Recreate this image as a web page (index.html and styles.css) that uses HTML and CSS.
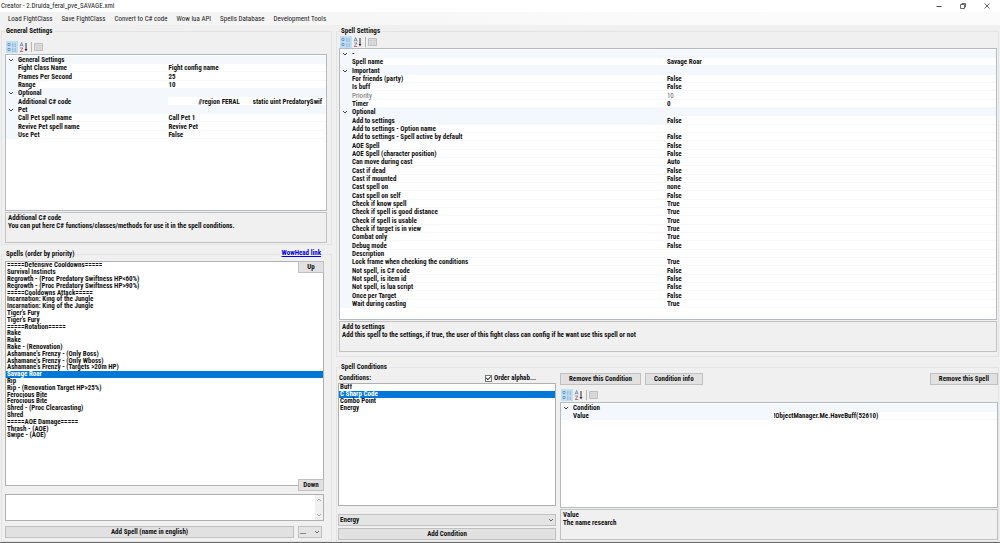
FILE: index.html
```
<!DOCTYPE html>
<html lang="en">
<head>
<meta charset="utf-8">
<title>Creator - 2.Druida_feral_pve_SAVAGE.xml</title>
<link rel="stylesheet" href="styles.css">
</head>
<body>
<svg class="sprites" aria-hidden="true">
  <symbol id="i-cat" viewBox="0 0 12 12">
    <path d="M2 2.500h2v2H2zM2 7.500h2v2H2z" fill="#eaf4fc" stroke="#5a86b2" stroke-width=".8"/>
    <path d="M6 3h1.500M8.500 3H10M6 5h1.500M8.500 5H10M6 8h1.500M8.500 8H10M6 10h1.500M8.500 10H10" stroke="#7797b8" stroke-width=".8"/>
  </symbol>
  <symbol id="i-sort" viewBox="0 0 12 12">
    <path d="M2 5.500 3.600 1.500l1.600 4M2.600 4.300h2" fill="none" stroke="#5f7cb8" stroke-width=".8"/>
    <path d="M2.200 7h2.800L2.200 10.500h3" fill="none" stroke="#9a5a6c" stroke-width=".8"/>
    <path d="M8 2v7" stroke="#333" stroke-width="1"/>
    <path d="M6.500 8h3L8 10.400z" fill="#333"/>
  </symbol>
  <symbol id="i-page" viewBox="0 0 12 12">
    <path d="M1.500 2.500h8v7h-8z" fill="#dedede" stroke="#bebebe"/>
    <path d="M2 4.500h7M3 6.500h2M6 6.500h2M3 8h2M6 8h2" stroke="#cacaca" stroke-width=".8"/>
  </symbol>
  <symbol id="i-down" viewBox="0 0 8 8"><path d="M2 3 4 5l2-2" fill="none" stroke="currentColor"/></symbol>
  <symbol id="i-up" viewBox="0 0 8 8"><path d="M2 5 4 3l2 2" fill="none" stroke="currentColor"/></symbol>
</svg>

<header class="titlebar">
  <h1 class="title">Creator - 2.Druida_feral_pve_SAVAGE.xml</h1>
  <div class="window-controls">
    <button type="button" aria-label="Minimize"><svg viewBox="0 0 8 8"><path d="M1.500 4.500h5" stroke="#444"/></svg></button>
    <button type="button" aria-label="Restore"><svg viewBox="0 0 8 8"><path d="M1.500 2.500h4v4h-4zM3 2.500v-1h3.500V5h-1" fill="none" stroke="#444" stroke-width=".8"/></svg></button>
    <button type="button" aria-label="Close"><svg viewBox="0 0 8 8"><path d="M1.500 1.500l5 5M6.500 1.500l-5 5" stroke="#444" stroke-width=".8"/></svg></button>
  </div>
</header>
<nav class="menubar">
  <button type="button">Load FightClass</button>
  <button type="button">Save FightClass</button>
  <button type="button">Convert to C# code</button>
  <button type="button">Wow lua API</button>
  <button type="button">Spells Database</button>
  <button type="button">Development Tools</button>
</nav>

<main class="workspace">
  <div class="column column-left">
    <fieldset class="group general">
      <legend>General Settings</legend>
      <div class="toolbar">
        <button type="button" class="on" aria-label="Categorized"><svg><use href="#i-cat"/></svg></button>
        <button type="button" aria-label="Alphabetical"><svg><use href="#i-sort"/></svg></button>
        <span class="divider"></span>
        <button type="button" aria-label="Property pages" disabled><svg><use href="#i-page"/></svg></button>
      </div>
      <div class="sheet">
        <table class="props split-left">
          <colgroup><col class="gutter"><col class="name"><col></colgroup>
          <tbody>
          <tr class="cat"><td><svg><use href="#i-down"/></svg></td><th colspan="2">General Settings</th></tr>
          <tr><td></td><th>Fight Class Name</th><td>Fight config name</td></tr>
          <tr><td></td><th>Frames Per Second</th><td>25</td></tr>
          <tr><td></td><th>Range</th><td>10</td></tr>
          <tr class="cat"><td><svg><use href="#i-down"/></svg></td><th colspan="2">Optional</th></tr>
          <tr class="current"><td></td><th>Additional C# code</th><td class="code">//region FERAL &nbsp; &nbsp; &nbsp; &nbsp;static uint PredatorySwif</td></tr>
          <tr class="cat"><td><svg><use href="#i-down"/></svg></td><th colspan="2">Pet</th></tr>
          <tr><td></td><th>Call Pet spell name</th><td>Call Pet 1</td></tr>
          <tr><td></td><th>Revive Pet spell name</th><td>Revive Pet</td></tr>
          <tr><td></td><th>Use Pet</th><td>False</td></tr>
          </tbody>
        </table>
      </div>
      <div class="hint">
        <h2>Additional C# code</h2>
        <p>You can put here C# functions/classes/methods for use it in the spell conditions.</p>
      </div>
    </fieldset>

    <fieldset class="group spells">
      <legend>Spells (order by priority)</legend>
      <a class="wowhead" href="#wowhead">WowHead link</a>
      <div class="list-area">
        <ul class="listbox" role="listbox" aria-label="Spells" tabindex="0">
          <li role="option">=====Defensive Cooldowns=====</li>
          <li role="option">Survival Instincts</li>
          <li role="option">Regrowth - (Proc Predatory Swiftness HP&lt;60%)</li>
          <li role="option">Regrowth - (Proc Predatory Swiftness HP&gt;90%)</li>
          <li role="option">=====Cooldowns Attack=====</li>
          <li role="option">Incarnation: King of the Jungle</li>
          <li role="option">Incarnation: King of the Jungle</li>
          <li role="option">Tiger's Fury</li>
          <li role="option">Tiger's Fury</li>
          <li role="option">=====Rotation=====</li>
          <li role="option">Rake</li>
          <li role="option">Rake</li>
          <li role="option">Rake - (Renovation)</li>
          <li role="option">Ashamane's Frenzy - (Only Boss)</li>
          <li role="option">Ashamane's Frenzy - (Only Wboss)</li>
          <li role="option">Ashamane's Frenzy - (Targets &gt;20m HP)</li>
          <li role="option" aria-selected="true" class="selected">Savage Roar</li>
          <li role="option">Rip</li>
          <li role="option">Rip - (Renovation Target HP&gt;25%)</li>
          <li role="option">Ferocious Bite</li>
          <li role="option">Ferocious Bite</li>
          <li role="option">Shred - (Proc Clearcasting)</li>
          <li role="option">Shred</li>
          <li role="option">=====AOE Damage=====</li>
          <li role="option">Thrash - (AOE)</li>
          <li role="option">Swipe - (AOE)</li>
        </ul>
        <button type="button" class="btn move move-up">Up</button>
        <button type="button" class="btn move move-down">Down</button>
      </div>
      <div class="names">
        <textarea aria-label="Spell names"></textarea>
        <div class="scroll"><svg><use href="#i-up"/></svg><svg><use href="#i-down"/></svg></div>
      </div>
      <div class="add-row">
        <button type="button" class="btn">Add Spell (name in english)</button>
        <div class="dropdown short">
          <select aria-label="Spell source"><option>...</option></select>
          <svg><use href="#i-down"/></svg>
        </div>
      </div>
    </fieldset>
  </div>

  <div class="column column-right">
    <fieldset class="group settings">
      <legend>Spell Settings</legend>
      <div class="toolbar tight">
        <button type="button" class="on" aria-label="Categorized"><svg><use href="#i-cat"/></svg></button>
        <button type="button" aria-label="Alphabetical"><svg><use href="#i-sort"/></svg></button>
        <span class="divider"></span>
        <button type="button" aria-label="Property pages" disabled><svg><use href="#i-page"/></svg></button>
      </div>
      <div class="sheet">
        <table class="props split-right">
          <colgroup><col class="gutter"><col class="name"><col></colgroup>
          <tbody>
          <tr class="cat"><td><svg><use href="#i-down"/></svg></td><th colspan="2">-</th></tr>
          <tr><td></td><th>Spell name</th><td>Savage Roar</td></tr>
          <tr class="cat"><td><svg><use href="#i-down"/></svg></td><th colspan="2">Important</th></tr>
          <tr><td></td><th>For friends (party)</th><td>False</td></tr>
          <tr><td></td><th>Is buff</th><td>False</td></tr>
          <tr class="readonly"><td></td><th>Priority</th><td>10</td></tr>
          <tr><td></td><th>Timer</th><td>0</td></tr>
          <tr class="cat"><td><svg><use href="#i-down"/></svg></td><th colspan="2">Optional</th></tr>
          <tr class="current"><td></td><th>Add to settings</th><td>False</td></tr>
          <tr><td></td><th>Add to settings - Option name</th><td></td></tr>
          <tr><td></td><th>Add to settings - Spell active by default</th><td>False</td></tr>
          <tr><td></td><th>AOE Spell</th><td>False</td></tr>
          <tr><td></td><th>AOE Spell (character position)</th><td>False</td></tr>
          <tr><td></td><th>Can move during cast</th><td>Auto</td></tr>
          <tr><td></td><th>Cast if dead</th><td>False</td></tr>
          <tr><td></td><th>Cast if mounted</th><td>False</td></tr>
          <tr><td></td><th>Cast spell on</th><td>none</td></tr>
          <tr><td></td><th>Cast spell on self</th><td>False</td></tr>
          <tr><td></td><th>Check if know spell</th><td>True</td></tr>
          <tr><td></td><th>Check if spell is good distance</th><td>True</td></tr>
          <tr><td></td><th>Check if spell is usable</th><td>True</td></tr>
          <tr><td></td><th>Check if target is in view</th><td>True</td></tr>
          <tr><td></td><th>Combat only</th><td>True</td></tr>
          <tr><td></td><th>Debug mode</th><td>False</td></tr>
          <tr><td></td><th>Description</th><td></td></tr>
          <tr><td></td><th>Lock frame when checking the conditions</th><td>True</td></tr>
          <tr><td></td><th>Not spell, is C# code</th><td>False</td></tr>
          <tr><td></td><th>Not spell, is item id</th><td>False</td></tr>
          <tr><td></td><th>Not spell, is lua script</th><td>False</td></tr>
          <tr><td></td><th>Once per Target</th><td>False</td></tr>
          <tr><td></td><th>Wait during casting</th><td>True</td></tr>
          </tbody>
        </table>
      </div>
      <div class="hint">
        <h2>Add to settings</h2>
        <p>Add this spell to the settings, if true, the user of this fight class can config if he want use this spell or not</p>
      </div>
    </fieldset>

    <fieldset class="group conditions">
      <legend>Spell Conditions</legend>
      <div class="panes">
        <div class="pane">
          <div class="list-head">
            <span id="cond-label">Conditions:</span>
            <label class="check"><input type="checkbox" checked><span>Order alphab...</span></label>
          </div>
          <ul class="listbox" role="listbox" aria-labelledby="cond-label" tabindex="0">
            <li role="option">Buff</li>
            <li role="option" aria-selected="true" class="selected">C Sharp Code</li>
            <li role="option">Combo Point</li>
            <li role="option">Energy</li>
          </ul>
          <div class="dropdown">
            <select aria-label="Condition type"><option>Energy</option></select>
            <svg><use href="#i-down"/></svg>
          </div>
          <button type="button" class="btn add-condition">Add Condition</button>
        </div>
        <div class="pane">
          <div class="actions">
            <button type="button" class="btn">Remove this Condition</button>
            <button type="button" class="btn">Condition info</button>
            <button type="button" class="btn last">Remove this Spell</button>
          </div>
          <div class="toolbar">
            <button type="button" class="on" aria-label="Categorized"><svg><use href="#i-cat"/></svg></button>
            <button type="button" aria-label="Alphabetical"><svg><use href="#i-sort"/></svg></button>
            <span class="divider"></span>
            <button type="button" aria-label="Property pages" disabled><svg><use href="#i-page"/></svg></button>
          </div>
          <div class="sheet">
            <table class="props split-condition">
              <colgroup><col class="gutter"><col class="name"><col></colgroup>
              <tbody>
              <tr class="cat"><td><svg><use href="#i-down"/></svg></td><th colspan="2">Condition</th></tr>
              <tr class="current"><td></td><th>Value</th><td>!ObjectManager.Me.HaveBuff(52610)</td></tr>
              </tbody>
            </table>
          </div>
          <div class="hint">
            <h2>Value</h2>
            <p>The name research</p>
          </div>
        </div>
      </div>
    </fieldset>
  </div>
</main>
</body>
</html>
```
FILE: styles.css
```
* { box-sizing: border-box; }

html, body { height: 100%; margin: 0; }

body {
  display: flex;
  flex-direction: column;
  background: #f0f0f0;
  border-bottom: 1px solid #6a6a6a;
  color: #111;
  font: bold 7px/8px "Roboto Condensed", Roboto, "Liberation Sans", sans-serif;
}

button, select, textarea, input { font: inherit; color: inherit; margin: 0; }
h1, h2, p, ul, fieldset, legend { margin: 0; padding: 0; font-size: inherit; }
.sprites { position: absolute; width: 0; height: 0; }

.titlebar {
  display: flex;
  justify-content: space-between;
  align-items: center;
  height: 12px;
  padding: 0 1px;
  background: #fff;
}
.title { font-weight: 400; color: #222; }
.window-controls { display: flex; }
.window-controls button {
  display: flex;
  justify-content: center;
  width: 24px;
  padding: 0;
  border: 0;
  background: none;
}
.window-controls svg { width: 8px; height: 8px; }

.menubar {
  display: flex;
  align-items: center;
  gap: 9px;
  height: 13px;
  padding: 0 8px;
  background: linear-gradient(90deg, #f1f1f1, #fafafa 60%, #fbfbfb);
}
.menubar button {
  padding: 0;
  border: 0;
  background: none;
  font-weight: 400;
  color: #222;
}

.workspace {
  flex: 1;
  min-height: 0;
  display: grid;
  grid-template-columns: 331fr 663fr;
  gap: 4px;
  padding: 2px 1px 0;
}
.column { display: grid; min-width: 0; min-height: 0; }
.column-left { grid-template-rows: 218fr 292fr; gap: 5px; }
.column-right { grid-template-rows: 330fr 179fr; gap: 6px; }

.group {
  display: flex;
  flex-direction: column;
  position: relative;
  min-width: 0;
  min-height: 0;
  border: 1px solid #e4e4e4;
}
.group legend { margin-left: 1px; padding-right: 2px; line-height: 8px; }
.general { padding: 4px 4px 1px 3px; }
.spells { padding: 3px 7px 3px 3px; }
.settings { padding: 1px 1px 4px 2px; }
.settings legend { margin-left: 2px; }
.conditions { padding: 1px 0 0 1px; }
.conditions legend { margin-left: 3px; }

.toolbar {
  display: flex;
  align-items: center;
  flex: none;
  height: 15px;
  padding-left: 1px;
}
.toolbar.tight { height: 12px; }
.toolbar button {
  display: flex;
  width: 12px;
  height: 12px;
  padding: 0;
  border: 0;
  background: none;
}
.toolbar .on { background: #bfdef3; }
.toolbar svg { width: 12px; height: 12px; }
.divider { width: 1px; height: 10px; margin: 0 1px; background: #b4b4b4; }

.sheet {
  flex: 1;
  min-height: 0;
  overflow: hidden;
  padding-top: 1px;
  border: 1px solid #b4bac0;
  background: #fff;
}
.props { width: 100%; table-layout: fixed; border-collapse: collapse; }
.props th, .props td {
  height: 8px;
  padding: 0;
  overflow: hidden;
  white-space: nowrap;
  text-align: left;
  font-weight: 700;
}
.props tr:nth-child(3n) > * { height: 9px; }
.props tr > * { box-shadow: inset 0 -1px #f6f7fa; }
.props tr > :first-child, .props .cat > *, .props .current > th {
  background: #f4f7fc;
  box-shadow: none;
}
.props svg { display: block; width: 8px; height: 8px; margin-left: 1px; color: #444; }
.gutter { width: 12px; }
.split-left .name { width: 47%; }
.split-right .name { width: 48%; }
.split-condition .name { width: 46%; }
.props .code { padding-left: 30px; }
.props .readonly > * { font-weight: 400; color: #666; }

.hint {
  flex: none;
  height: 31px;
  margin-top: 1px;
  padding: 1px 2px;
  border: 1px solid #c2c2c2;
}

.wowhead {
  position: absolute;
  top: -9px;
  right: 10px;
  padding-left: 2px;
  background: #f0f0f0;
  color: #0000e0;
}
.list-area { position: relative; flex: 1; min-height: 0; display: flex; }
.listbox {
  flex: 1;
  min-height: 0;
  overflow: hidden;
  border: 1px solid #b0b0b0;
  background: #fff;
  list-style: none;
}
.listbox li { height: 7px; padding-left: 1px; line-height: 7px; white-space: nowrap; }
.listbox li:nth-child(5n) { height: 6px; }
.listbox .selected { background: #0078d7; color: #fff; }

.btn {
  height: 12px;
  padding: 0 8px;
  border: 1px solid #c0c0c0;
  background: #e1e1e1;
  line-height: 8px;
  white-space: nowrap;
}
.move { position: absolute; right: 0; width: 26px; padding: 0; }
.move-up { top: 0; }
.move-down { bottom: -5px; }

.names {
  display: flex;
  flex: none;
  height: 27px;
  margin-top: 8px;
  border: 1px solid #b0b0b0;
  background: #fff;
}
.names textarea { flex: 1; min-width: 0; padding: 1px; border: 0; background: none; resize: none; outline: 0; overflow: hidden; }
.scroll {
  display: flex;
  flex-direction: column;
  justify-content: space-between;
  width: 8px;
  padding: 1px 0;
  background: #f0f0f0;
  color: #aaa;
}
.scroll svg { width: 8px; height: 8px; }

.add-row { display: flex; gap: 4px; margin-top: 5px; padding-right: 2px; }
.add-row .btn { flex: 1; }
.dropdown { position: relative; flex: none; display: flex; height: 12px; }
.dropdown select {
  flex: 1;
  appearance: none;
  padding: 0 1px;
  border: 1px solid #c0c0c0;
  border-radius: 0;
  background: #e4e4e4;
}
.dropdown svg { position: absolute; right: 1px; top: 2px; width: 8px; height: 8px; color: #666; pointer-events: none; }
.short { width: 24px; }

.panes { flex: 1; min-height: 0; display: grid; grid-template-columns: 218fr 438fr; gap: 4px; }
.pane { display: flex; flex-direction: column; min-width: 0; min-height: 0; padding-bottom: 1px; }
.list-head { display: flex; justify-content: space-between; align-items: center; flex: none; height: 11px; padding: 1px 20px 0 1px; }
.check { display: flex; align-items: center; gap: 2px; }
.check input {
  appearance: none;
  display: grid;
  width: 7px;
  height: 7px;
  border: 1px solid #777;
  background: #fff;
}
.check input:checked::before {
  content: "";
  width: 4px;
  height: 2px;
  border: solid #444;
  border-width: 0 0 1px 1px;
  transform: rotate(-45deg);
}
.pane .dropdown { margin: 8px 0 2px; }
.actions { display: flex; gap: 4px; margin-top: 1px; }
.actions .last { margin-left: auto; }
.pane .toolbar { margin-top: 2px; }
```
